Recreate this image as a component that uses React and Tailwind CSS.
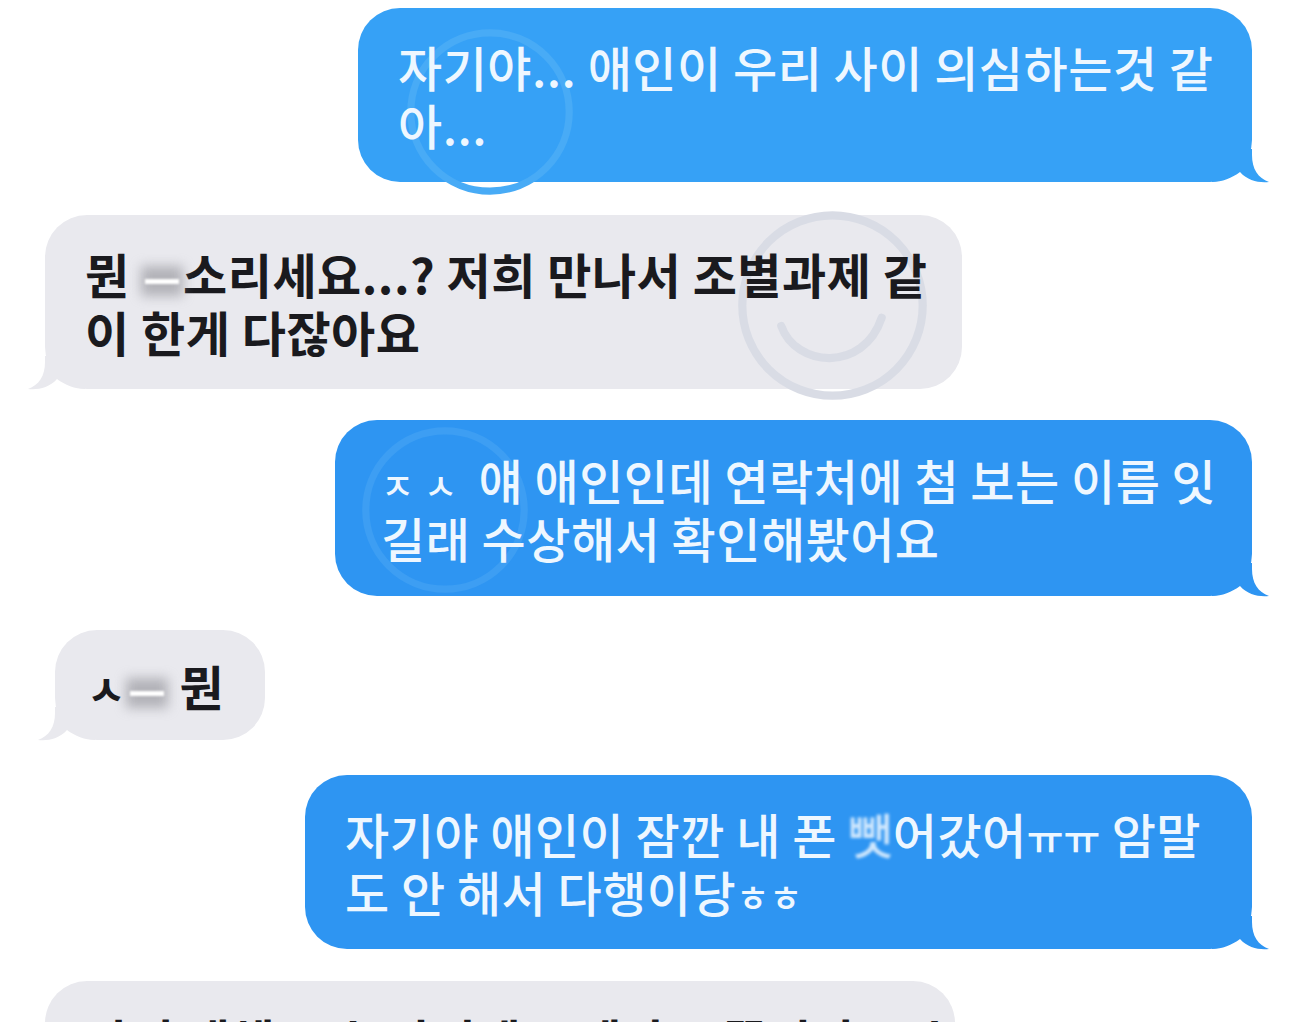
import React from "react";

// faint circular watermark stamped over the screenshot
function Watermark({ className, color, smile }) {
  return (
    <svg className={`pointer-events-none absolute ${className}`} viewBox="0 0 200 200" fill="none">
      <circle cx="100" cy="100" r="88" stroke={color} strokeWidth="8" />
      {smile && (
        <path d="M50 120 C 64 160, 130 166, 148 112" stroke={color} strokeWidth="8" strokeLinecap="round" />
      )}
    </svg>
  );
}

function Tail({ side, color }) {
  const pos = side === "right" ? "right-[-17px]" : "left-[-17px] -scale-x-100";
  return (
    <svg className={`absolute bottom-[-1px] ${pos} w-[57px] h-[34px]`} viewBox="0 0 57 34">
      <path
        d="M0 33 L0 0 L40 0 L40 6 C40 20 46 29 57 33 C47 34 36 32 28 23 C20 29 10 33 0 33 Z"
        fill={color}
      />
    </svg>
  );
}

function Bubble({ me, color, className, tail = true, mark, children }) {
  return (
    <div
      className={`relative rounded-[42px] whitespace-nowrap text-[48px] leading-[58px] tracking-[0.5px] ${
        me ? "self-end text-[#eef7ff] font-medium" : "self-start text-[#1a1a1e] font-bold"
      } ${className}`}
      style={{ backgroundColor: color }}
    >
      {tail && <Tail side={me ? "right" : "left"} color={color} />}
      {mark}
      <div className="relative">{children}</div>
    </div>
  );
}

function Smudge({ dark }) {
  return (
    <span className="relative inline-block w-[42px] h-[30px] align-[-2px]">
      <span className={`absolute inset-0 blur-[6px] ${dark ? "bg-[#8d8d94]/60" : "bg-[#d8eaff]/60"}`} />
      <span className="absolute left-[4px] right-[4px] top-[13px] h-[5px] bg-white blur-[1px]" />
    </span>
  );
}

export default function App() {
  const blueA = "#36a1f6";
  const blueB = "#2e95f2";
  const gray = "#e9e9ee";

  return (
    <div className="h-[1022px] w-full overflow-hidden bg-white font-['Noto_Sans_CJK_KR','Noto_Sans',sans-serif]">
      <div className="flex flex-col pr-[38px] pl-[45px] pt-[8px]">
        <Bubble
          me
          color={blueA}
          className="w-[894px] pl-[40px] py-[29px]"
          mark={<Watermark className="left-[42px] top-[14px] w-[180px] h-[180px]" color="#48abf6" />}
        >
          자기야... 애인이 우리 사이 의심하는것 같
          <br />
          아...
        </Bubble>

        <Bubble
          color={gray}
          className="mt-[33px] w-[917px] pl-[40px] py-[29px]"
          mark={<Watermark className="left-[685px] top-[-12px] w-[205px] h-[205px]" color="#d9dce5" smile />}
        >
          뭔 <Smudge dark />소리세요...? 저희 만나서 조별과제 같
          <br />
          이 한게 다잖아요
        </Bubble>

        <Bubble
          me
          color={blueB}
          className="mt-[31px] w-[917px] pl-[46px] py-[30px]"
          mark={<Watermark className="left-[20px] top-[0px] w-[180px] h-[180px]" color="#3d9ef3" />}
        >
          <span className="text-[36px] leading-[0] tracking-[10px]">ㅈㅅ</span> 얘 애인인데 연락처에 첨 보는 이름 잇
          <br />
          길래 수상해서 확인해봤어요
        </Bubble>

        <Bubble color={gray} className="mt-[34px] ml-[10px] w-[210px] pl-[32px] py-[26px]">
          <span className="text-[42px] leading-[0]">ㅅ</span>
          <Smudge dark /> 뭔
        </Bubble>

        <Bubble me color={blueB} className="mt-[35px] w-[947px] pl-[40px] py-[29px]">
          자기야 애인이 잠깐 내 폰 <span className="blur-[1.5px] opacity-85">뺏</span>어갔어
          <span className="text-[40px] leading-[0] tracking-[0px]">ㅠㅠ</span> 암말
          <br />
          도 안 해서 다행이당<span className="text-[36px] leading-[0] tracking-[0px]">ㅎㅎ</span>
        </Bubble>

        <Bubble color={gray} tail={false} className="mt-[32px] w-[910px] pl-[40px] py-[29px]">
          아니 대체 무슨 말이에요 제가 그쪽이랑 무슨
          <br />
          사이라고 그러세요
        </Bubble>
      </div>
    </div>
  );
}
